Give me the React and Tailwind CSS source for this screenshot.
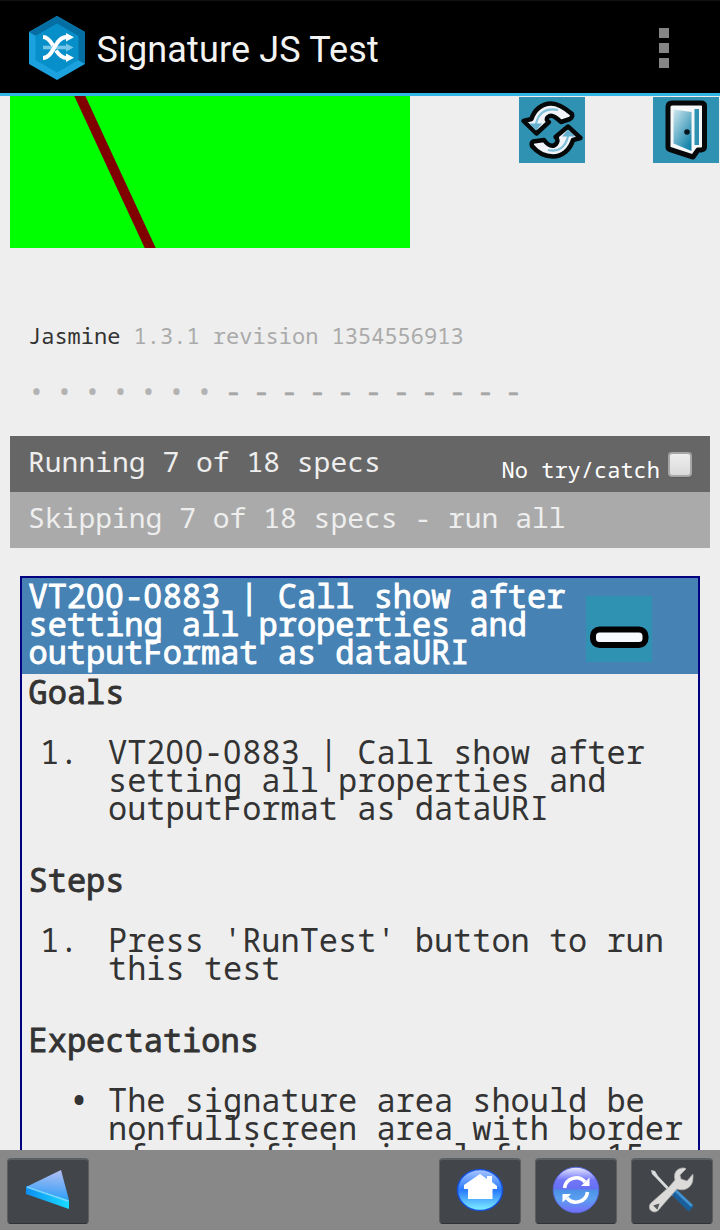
function AppLogo() {
  return (
    <svg width="56" height="64" viewBox="0 0 56 64">
      <path d="M28 0 56 16V48L28 64 0 48V16Z" fill="#1ba1dd" />
      <path d="M28 0 56 16V48L49 44V20L28 8 7 20 0 16Z" fill="#056fa3" />
      <path d="M28 7.5 49.500 20V44L28 56.500 6.500 44V20Z" fill="#078fca" />
      <path d="M14 31.500H37" stroke="#74c6e8" strokeWidth="3.600" />
      <path d="m37 27.500 7.500 4-7.500 4Z" fill="#74c6e8" />
      <path d="M14 42C25 42 25 21 38 21" fill="none" stroke="#fff" strokeWidth="4" />
      <path d="M14 21C25 21 25 42 38 42" fill="none" stroke="#fff" strokeWidth="4" strokeDasharray="14 5.500 40" />
      <path d="m37 17 8 4.300-8 4.300ZM37 37.500l8 4.300-8 4.300Z" fill="#fff" />
    </svg>
  );
}

function ReloadTile() {
  return (
    <svg width="66" height="66" viewBox="0 0 66 66" className="shrink-0">
      <rect width="66" height="66" fill="#3092b2" />
      <g stroke="#050808" strokeWidth="4.500" strokeLinejoin="round" fill="#f1f4f8">
        <path d="M4.500 24 12.500 22C15 13 23 6.500 32 6.500 39 6.500 46 11 53 17Q54 20 51 22L42 25C37 20 33 18 30.500 19 28 20 27 22 28.500 24L30 25 17.500 36.500Z" />
        <path d="M49 29.500 61.500 41 54 43C51 53 43 59.500 34 59.500 26 59.500 18 55 13 49Q12 46 14 44.500L25 43C28 47 32 49.500 35 48.500 38 47 39 44 38 41.500L36.500 40Z" />
      </g>
      <path d="M17 33V27C19 17 26 10 39 13M49 33V39C47 49 40 56 29 53" fill="none" stroke="#7fc2da" strokeWidth="2.200" />
      <path d="M10 26.500H23L17 33.500ZM49 32.500 56 39.500H43Z" fill="#63b1cf" />
    </svg>
  );
}

function DoorTile() {
  return (
    <svg width="66" height="66" viewBox="0 0 66 66" className="shrink-0">
      <defs>
        <linearGradient id="door" x1="0" y1="0" x2="0.700" y2="1"><stop offset="0" stopColor="#cfe8ef" /><stop offset="1" stopColor="#1684ab" /></linearGradient>
      </defs>
      <rect width="66" height="66" fill="#3092b2" />
      <path d="M19 6H48Q51.500 6 51.500 9V50Q51.500 52.500 48 53H45L40 60 17 52.500Q15 52 15 50V10Q15 6 19 6Z" fill="#f6f7f9" stroke="#050708" strokeWidth="5" strokeLinejoin="round" />
      <path d="M20.500 12.500 38.500 15V54L20.500 46.500Z" fill="url(#door)" />
      <rect x="41.500" y="12" width="4.500" height="36" fill="#3092b2" />
      <circle cx="34" cy="35" r="2.800" fill="#06151c" />
    </svg>
  );
}

function MinusTile() {
  return (
    <svg width="66" height="66" viewBox="0 0 66 66" className="shrink-0">
      <rect width="66" height="66" fill="#3092b2" />
      <rect x="7" y="33.500" width="52.500" height="15.500" rx="6.500" fill="#f6faff" stroke="#000" strokeWidth="6" />
    </svg>
  );
}

function BackIcon() {
  return (
    <svg width="46" height="42" viewBox="0 0 46 42">
      <defs>
        <linearGradient id="bk" x1="0.700" y1="0" x2="0.600" y2="1"><stop offset="0" stopColor="#b4bff2" /><stop offset="1" stopColor="#2c9df8" /></linearGradient>
        <linearGradient id="bk2" x1="0" y1="0" x2="1" y2="0"><stop offset="0" stopColor="#0d8ff2" /><stop offset="1" stopColor="#19dcff" /></linearGradient>
      </defs>
      <path d="M1 18 36 1 44 31 1 20Z" fill="url(#bk)" />
      <path d="M1 17 44 31V40L1 25Z" fill="url(#bk2)" />
      <path d="M2 18 43 32" stroke="#7fd4ff" strokeWidth="1.500" />
    </svg>
  );
}

function HomeIcon() {
  return (
    <svg width="48" height="44" viewBox="0 0 48 44">
      <defs>
        <linearGradient id="hm" x1="0" y1="0" x2="0" y2="1"><stop offset="0" stopColor="#a9c6ff" /><stop offset="0.500" stopColor="#2879ff" /><stop offset="1" stopColor="#7ff2ff" /></linearGradient>
      </defs>
      <ellipse cx="24" cy="22" rx="22.500" ry="20.500" fill="url(#hm)" stroke="#1550d8" strokeWidth="1.500" />
      <path d="M24 6 31 11V8H36V14L41 18V21H36.500V31H12V21H8V17Z" fill="#fff" />
    </svg>
  );
}

function SyncIcon() {
  return (
    <svg width="48" height="48" viewBox="0 0 48 48">
      <defs>
        <linearGradient id="sy" x1="0" y1="0" x2="0" y2="1"><stop offset="0" stopColor="#e9ebff" /><stop offset="0.280" stopColor="#7377fa" /><stop offset="0.480" stopColor="#6570f2" /><stop offset="0.500" stopColor="#4d91e6" /><stop offset="0.700" stopColor="#5a9ff0" /><stop offset="1" stopColor="#776dfa" /></linearGradient>
      </defs>
      <circle cx="24" cy="24" r="22.800" fill="url(#sy)" stroke="#5868db" />
      <path d="M12.500 22A11.700 11.700 0 0 1 33 16M35.500 26A11.700 11.700 0 0 1 15 32" fill="none" stroke="#fff" strokeWidth="3.600" />
      <path d="M29 20H37.500V11.500ZM10.500 28H19L10.500 36.500Z" fill="#fff" />
    </svg>
  );
}

function ToolsIcon() {
  return (
    <svg width="46" height="46" viewBox="0 0 46 46">
      <path d="M2 3 6 4 9 9 26 27 24 29 7 11 3 7Z" fill="#d7dbdc" />
      <path d="M25 25 42 42" stroke="#185f9c" strokeWidth="7" />
      <path d="M26 23 43 39" stroke="#4291cf" strokeWidth="3" />
      <path d="M36 1C28 0 24 6 26 13L20 20 2 36C-1 39 0 44 5 45 8 45 10 43 12 40L28 22C36 25 44 20 44 11V7L38 14 32 12 31 8 37 2Z" fill="#dcdbd9" stroke="#a9a9a8" strokeWidth="0.700" />
      <path d="m6 39 3-1-1 3Z" fill="#53575a" stroke="#53575a" strokeWidth="2" />
    </svg>
  );
}

function ToolButton({ label, children }) {
  return (
    <button aria-label={label} className="flex h-[66px] w-[82px] items-center justify-center rounded-[4px] border border-t-2 border-[#5b5f62] border-b-[#303437] bg-[#42464a] pb-1">
      {children}
    </button>
  );
}

// Sets zeros in a face whose zero has no slash, keeping the monospace advance.
function Plain({ text }) {
  return text.split(/(0+)/).map((part, i) =>
    part.startsWith('0')
      ? <span key={i} className="font-['Noto_Sans',sans-serif] tracking-[0.028em]">{part}</span>
      : part
  );
}

function Section({ title, marker, markerClass, children }) {
  return (
    <section className="mb-[44px]">
      <h2 className="-ml-[0.5px] mb-8 font-normal [-webkit-text-stroke:0.9px]">{title}</h2>
      <div className="flex">
        <span className={`w-[79px] shrink-0 whitespace-pre ${markerClass}`}>{marker}</span>
        <div className="whitespace-pre tracking-[-0.03px]"><Plain text={children} /></div>
      </div>
    </section>
  );
}

const TITLE = 'VT200-0883 | Call show after\nsetting all properties and\noutputFormat as dataURI';

export default function App() {
  const results = [...Array(7).fill('•'), ...Array(11).fill('-')];
  return (
    <div className="flex h-[1230px] w-[720px] flex-col overflow-hidden bg-[#eeeeee] font-['Noto_Sans_Mono','DejaVu_Sans_Mono',monospace] text-[#333333]">
      <header className="flex h-24 shrink-0 items-center border-b-3 border-t border-b-[#33b5e5] border-t-[#111] bg-black pl-[28.5px] pt-[2px]">
        <AppLogo />
        <h1 className="ml-3 mt-1 font-[Roboto,sans-serif] text-[36px] leading-[44px] tracking-[0.15px] text-[#f3f3f3]">Signature JS Test</h1>
        <div className="ml-auto mr-[51px] flex flex-col gap-[5px]">
          <i className="size-[10px] bg-[#858585]" />
          <i className="size-[10px] bg-[#858585]" />
          <i className="size-[10px] bg-[#858585]" />
        </div>
      </header>

      <main className="flex min-h-0 flex-1 flex-col overflow-hidden">
        <div className="flex h-[152px] shrink-0 pl-[10px]">
          <svg width="400" height="152" className="shrink-0 bg-[#00ff00]">
            <path d="M67.500-5 143 158" stroke="#800000" strokeWidth="10" />
          </svg>
          <div className="ml-[109px] mt-px flex gap-[68px]">
            <ReloadTile />
            <DoorTile />
          </div>
        </div>

        <p className="mt-[73px] shrink-0 pl-7 text-[22px] leading-7">
          Jasmine <span className="text-[#aaaaaa]">1.3.1 revision 1354556913</span>
        </p>

        <div className="mt-7 flex h-7 shrink-0 pl-7 text-[28px] leading-7 text-[#b2b2b2]">
          {results.map((r, i) => (
            <span key={i} className={r === '-' ? 'w-7 shrink-0 pl-px leading-[26px] text-[#a6a6a6] [-webkit-text-stroke:0.6px]' : 'w-7 shrink-0'}>{r}</span>
          ))}
        </div>

        <div className="mx-[10px] mt-[31px] flex h-14 shrink-0 justify-between bg-[#666666] px-[18px] text-[28px] leading-[50px] text-[#eeeeee]">
          <span>Running 7 of 18 specs</span>
          <label className="flex items-start text-[22px] text-white">
            <span className="mt-2">No try/catch</span>
            <span className="ml-2 mt-4 h-[25px] w-6 rounded-[4px] border-2 border-[#a6a6a6] bg-linear-to-b from-[#eeeeee] to-[#dadada] shadow-[0_1px_0_#595959]" />
          </label>
        </div>
        <div className="mx-[10px] h-14 shrink-0 bg-[#aaaaaa] pl-[18px] text-[28px] leading-[50px] text-[#eeeeee]">Skipping 7 of 18 specs - run all</div>

        <article className="mx-5 mt-7 shrink-0 border-2 border-[#000080] text-[32px] leading-7">
          <div className="flex h-24 bg-[#4682b4] pl-[6.5px] pt-1 text-white">
            <h2 className="w-[557.5px] whitespace-pre font-normal tracking-[-0.03px] [-webkit-text-stroke:0.9px]"><Plain text={TITLE} /></h2>
            <div className="mt-[14px]"><MinusTile /></div>
          </div>
          <div className="pl-[7px] pt-1">
            <Section title="Goals" marker="1." markerClass="pl-[11px]">{TITLE}</Section>
            <Section title="Steps" marker="1." markerClass="pl-[11px]">{"Press 'RunTest' button to run\nthis test"}</Section>
            <Section title="Expectations" marker="•" markerClass="h-7 pl-[38px] text-[40px]">{'The signature area should be\nnonfullscreen area with border\nof specified size left as 15'}</Section>
          </div>
        </article>
      </main>

      <footer className="flex h-20 shrink-0 justify-between bg-[#888888] px-[7px] pt-2">
        <ToolButton label="Back"><BackIcon /></ToolButton>
        <div className="flex gap-[14px]">
          <ToolButton label="Home"><HomeIcon /></ToolButton>
          <ToolButton label="Reload"><SyncIcon /></ToolButton>
          <ToolButton label="Settings"><ToolsIcon /></ToolButton>
        </div>
      </footer>
    </div>
  );
}
